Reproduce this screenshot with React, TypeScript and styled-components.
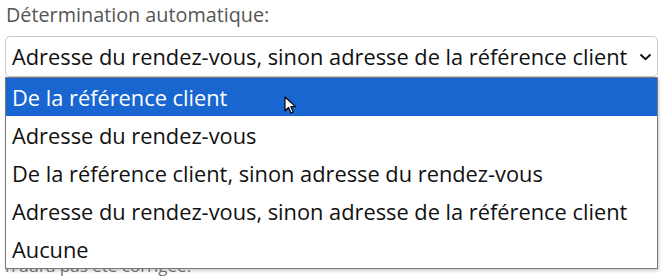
import styled, { createGlobalStyle } from 'styled-components';

const GlobalStyle = createGlobalStyle`
	html, body {
		margin: 0;
		padding: 0;
		background: #ffffff;
		overflow: hidden;
	}
	body {
		font-family: 'Open Sans', 'Noto Sans', sans-serif;
	}
`;

const Page = styled.div`
	width: 665px;
	height: 277px;
	padding: 3px 0 0 5px;
	box-sizing: border-box;
	position: relative;
	overflow: hidden;
`;

const Label = styled.div`
	font-size: 19.8px;
	color: #555555;
	line-height: 24px;
	padding-left: 1px;
	margin-bottom: 9px;
`;

const Field = styled.div`
	position: relative;
	width: 653px;
`;

const SelectBox = styled.div`
	height: 41px;
	box-sizing: border-box;
	border: 1px solid #c8c8c8;
	border-radius: 5px;
	display: flex;
	align-items: center;
	justify-content: space-between;
	padding: 0 5px 0 6px;
	font-size: 21.8px;
	color: #111111;
	white-space: nowrap;
`;

const Help = styled.div`
	padding-top: 6px;
	font-size: 17px;
	color: #7a7a7a;
	line-height: 22px;
	white-space: nowrap;
`;

const HelpLine = styled.div<{ gap?: number }>`
	margin-top: ${(p) => p.gap ?? 0}px;
`;

const List = styled.ul`
	position: absolute;
	top: 41px;
	left: 0;
	width: 653px;
	margin: 0;
	padding: 0;
	list-style: none;
	background: #ffffff;
	border: 1px solid #7a7a7a;
	box-sizing: border-box;
	box-shadow: 1px 2px 3px rgba(0, 0, 0, 0.2);
`;

const Option = styled.li<{ active?: boolean }>`
	height: 38px;
	display: flex;
	align-items: center;
	padding-left: 6px;
	font-size: 21.8px;
	white-space: nowrap;
	color: ${(p) => (p.active ? '#ffffff' : '#111111')};
	background: ${(p) => (p.active ? '#1a66d1' : 'transparent')};
`;

const Pointer = styled.svg`
	position: absolute;
	left: 284px;
	top: 96px;
`;

const options = [
	'De la référence client',
	'Adresse du rendez-vous',
	'De la référence client, sinon adresse du rendez-vous',
	'Adresse du rendez-vous, sinon adresse de la référence client',
	'Aucune',
];

const App = () => {
	return (
		<>
			<GlobalStyle />
			<Page>
				<Label>Détermination automatique:</Label>
				<Field>
					<SelectBox>
						<span>Adresse du rendez-vous, sinon adresse de la référence client</span>
						<svg width='13' height='8' viewBox='0 0 13 8'>
							<path d='M1.5 1.5 L6.5 6.2 L11.5 1.5' fill='none' stroke='#111' strokeWidth='2' />
						</svg>
					</SelectBox>
					<Help>
						<HelpLine>
							La position du rendez-vous est déterminée automatiquement lorsque l'adresse po
						</HelpLine>
						<HelpLine gap={106}>
							Si aucune position n'est trouvée, la position devra être saisie manuellement de
						</HelpLine>
						<HelpLine>
							L'adresse sera utilisée pour la recherche, tant que la position n'a pas été fi
						</HelpLine>
						<HelpLine>n'aura pas été corrigée.</HelpLine>
					</Help>
					<List>
						{options.map((o, i) => (
							<Option key={o} active={i === 0}>
								{o}
							</Option>
						))}
					</List>
				</Field>
				<Pointer width='13' height='19' viewBox='0 0 13 19'>
					<path
						d='M1 1 L1 15 L4.5 11.5 L7 17 L9.2 16 L6.8 10.6 L11.5 10.6 Z'
						fill='#ffffff'
						stroke='#000000'
						strokeWidth='1.2'
						strokeLinejoin='round'
					/>
				</Pointer>
			</Page>
		</>
	);
};

export default App;
